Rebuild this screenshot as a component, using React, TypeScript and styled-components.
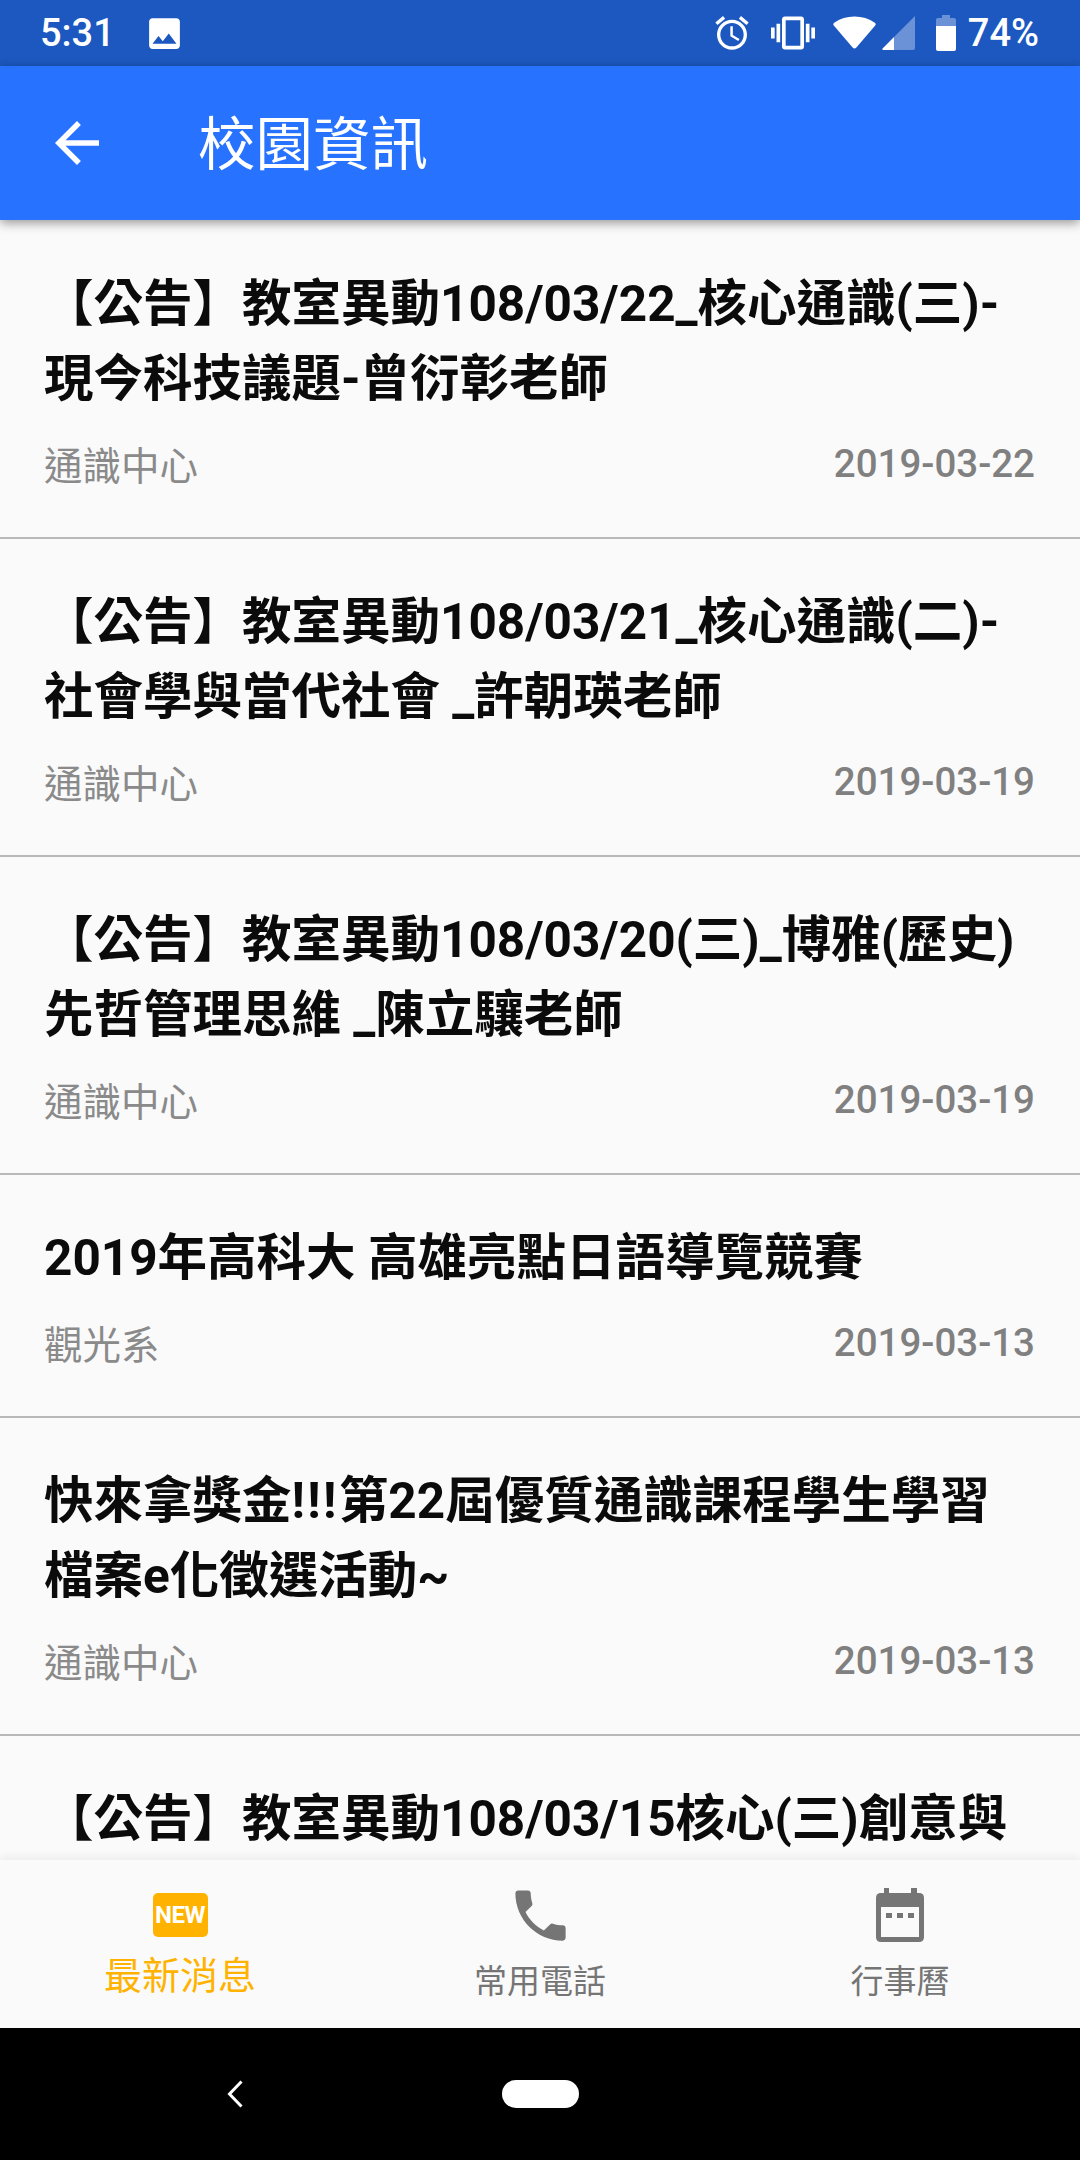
import React from "react";
import styled, { createGlobalStyle } from "styled-components";

const FONT = `Roboto, "Noto Sans CJK TC", sans-serif`;

const Global = createGlobalStyle`
  html, body { margin: 0; padding: 0; background: #000; }
  * { box-sizing: border-box; }
`;

const Screen = styled.div`
  width: 1080px;
  height: 2160px;
  display: flex;
  flex-direction: column;
  overflow: hidden;
  background: #fafafa;
  font-family: ${FONT};
`;

const StatusBar = styled.div`
  height: 66px;
  flex: none;
  display: flex;
  align-items: center;
  padding: 0 41px 0 40px;
  background: #1c58c0;
  color: #fff;
`;
const Time = styled.span`
  font-size: 38px;
  font-weight: 500;
  width: 104px;
`;
const StatusSpacer = styled.div`
  flex: 1;
`;
const StatusIcons = styled.div`
  display: flex;
  align-items: center;
`;
const Glyph = styled.svg<{ $gap?: number }>`
  display: block;
  flex: none;
  fill: currentColor;
  margin-left: ${(p) => p.$gap ?? 0}px;
`;
const Percent = styled.span`
  font-size: 38px;
  font-weight: 500;
  margin-left: 12px;
`;

const AppBar = styled.header`
  position: relative;
  z-index: 2;
  height: 154px;
  flex: none;
  display: flex;
  align-items: center;
  padding-left: 44px;
  background: #2773ff;
  color: #fff;
  box-shadow: 0 3px 10px rgba(0, 0, 0, 0.4);
`;
const BackIcon = styled.svg`
  width: 66px;
  height: 66px;
  fill: #fff;
`;
const Title = styled.h1`
  margin: 6px 0 0 88px;
  font-size: 57.5px;
  font-weight: 400;
  line-height: 1;
`;

const List = styled.main`
  flex: 1;
  min-height: 0;
  overflow: hidden;
  padding-top: 1px;
`;
const Row = styled.article`
  padding: 46px 44px 46px 44px;
  border-bottom: 2px solid #b8b8b8;
`;
const RowTitle = styled.div`
  font-size: 49.5px;
  font-weight: 700;
  line-height: 75px;
  color: #0b0b0b;
  white-space: nowrap;
`;
const Bangs = styled.span`
  letter-spacing: 2.4px;
`;
const Meta = styled.div`
  display: flex;
  justify-content: space-between;
  align-items: center;
  margin-top: 18px;
  height: 56px;
  padding-right: 1px;
  color: #8a8a8a;
`;
const Source = styled.span`
  font-size: 38.5px;
`;
const DateText = styled.span`
  font-size: 38.5px;
  font-weight: 500;
  color: #808080;
`;

const BottomNav = styled.nav`
  position: relative;
  z-index: 2;
  height: 168px;
  flex: none;
  display: grid;
  grid-template-columns: repeat(3, 1fr);
  background: #fafafa;
  box-shadow: 0 -3px 8px rgba(0, 0, 0, 0.06);
`;
const Tab = styled.div<{ $active?: boolean }>`
  display: flex;
  flex-direction: column;
  align-items: center;
  color: ${(p) => (p.$active ? "#ffb300" : "#757575")};
`;
const TabIconBox = styled.div`
  height: 54px;
  margin-top: 28px;
  display: flex;
  align-items: center;
  justify-content: center;
`;
const TabLabel = styled.span<{ $active?: boolean }>`
  font-size: ${(p) => (p.$active ? 38 : 33)}px;
  line-height: 44px;
  margin-top: ${(p) => (p.$active ? 12 : 18)}px;
`;
const NewBadge = styled.div`
  width: 55px;
  height: 44px;
  border-radius: 5px;
  background: #ffb300;
  color: #fff;
  display: flex;
  align-items: center;
  justify-content: center;
  font-size: 24px;
  font-weight: 700;
  letter-spacing: -0.5px;
  line-height: 1;
`;

const NavBar = styled.div`
  height: 132px;
  flex: none;
  background: #000;
  display: flex;
  align-items: center;
  padding-left: 227px;
  gap: 259px;
`;
const Pill = styled.div`
  width: 77px;
  height: 28px;
  border-radius: 14px;
  background: #fff;
`;

const items: { lines: React.ReactNode[]; src: string; date: string }[] = [
  { lines: ["【公告】教室異動108/03/22_核心通識(三)-", "現今科技議題-曾衍彰老師"], src: "通識中心", date: "2019-03-22" },
  { lines: ["【公告】教室異動108/03/21_核心通識(二)-", "社會學與當代社會 _許朝瑛老師"], src: "通識中心", date: "2019-03-19" },
  { lines: ["【公告】教室異動108/03/20(三)_博雅(歷史)", "先哲管理思維 _陳立驤老師"], src: "通識中心", date: "2019-03-19" },
  { lines: ["2019年高科大 高雄亮點日語導覽競賽"], src: "觀光系", date: "2019-03-13" },
  {
    lines: [
      <>
        快來拿獎金<Bangs>!!!</Bangs>第22屆優質通識課程學生學習
      </>,
      "檔案e化徵選活動~",
    ],
    src: "通識中心",
    date: "2019-03-13",
  },
  { lines: ["【公告】教室異動108/03/15核心(三)創意與", "問題解決"], src: "通識中心", date: "2019-03-13" },
];

export default function App() {
  return (
    <Screen>
      <Global />
      <StatusBar>
        <Time>5:31</Time>
        <Glyph width="41" height="41" viewBox="0 0 24 24">
          <path d="M21 19V5c0-1.1-.9-2-2-2H5c-1.1 0-2 .9-2 2v14c0 1.1.9 2 2 2h14c1.1 0 2-.9 2-2zM8.5 13.5l2.5 3.01L14.5 12l4.5 6H5l3.5-4.5z" />
        </Glyph>
        <StatusSpacer />
        <StatusIcons>
          <Glyph width="40" height="40" viewBox="0 0 24 24">
            <path d="M22 5.72l-4.6-3.86-1.29 1.53 4.6 3.86L22 5.72zM7.88 3.39L6.6 1.86 2 5.71l1.29 1.53 4.59-3.85zM12.5 8H11v6l4.75 2.85.75-1.23-4-2.37V8zM12 4c-4.97 0-9 4.03-9 9s4.02 9 9 9c4.97 0 9-4.03 9-9s-4.03-9-9-9zm0 16c-3.87 0-7-3.13-7-7s3.13-7 7-7 7 3.13 7 7-3.13 7-7 7z" />
          </Glyph>
          <Glyph $gap={19} width="44" height="44" viewBox="0 0 24 24">
            <path d="M0 15h2V9H0v6zm3 2h2V7H3v10zm19-8v6h2V9h-2zm-3 8h2V7h-2v10zM16.5 3h-9C6.67 3 6 3.67 6 4.5v15c0 .83.67 1.5 1.5 1.5h9c.83 0 1.5-.67 1.5-1.5v-15c0-.83-.67-1.5-1.5-1.5zM16 19H8V5h8v14z" />
          </Glyph>
          <Glyph $gap={18} width="43" height="34" viewBox="0 0 43 34">
            <path d="M19.6 31.6 L0.8 9.6 Q-0.4 8 1.2 6.8 Q10 0.5 21.5 0.5 Q33 0.5 41.8 6.8 Q43.4 8 42.2 9.6 L23.4 31.6 Q21.5 33.6 19.6 31.6 Z" />
          </Glyph>
          <Glyph $gap={6} width="34" height="36" viewBox="0 0 34 36">
            <path opacity="0.35" d="M33 1 V33 Q33 35 31 35 H12 V22 Z" />
            <path d="M12 22 V35 H1 Q0 35 0.6 33.5 Z" />
          </Glyph>
          <Glyph $gap={20} width="20" height="36" viewBox="0 0 20 36">
            <path opacity="0.35" d="M6 0 H14 V3 H18 Q20 3 20 5 V11 H0 V5 Q0 3 2 3 H6 Z" />
            <path d="M0 11 H20 V34 Q20 36 18 36 H2 Q0 36 0 34 Z" />
          </Glyph>
          <Percent>74%</Percent>
        </StatusIcons>
      </StatusBar>

      <AppBar>
        <BackIcon viewBox="0 0 24 24">
          <path d="M20 11H7.83l5.59-5.59L12 4l-8 8 8 8 1.41-1.41L7.83 13H20v-2z" />
        </BackIcon>
        <Title>校園資訊</Title>
      </AppBar>

      <List>
        {items.map((it, i) => (
          <Row key={i}>
            <RowTitle>
              {it.lines.map((l, j) => (
                <div key={j}>{l}</div>
              ))}
            </RowTitle>
            <Meta>
              <Source>{it.src}</Source>
              <DateText>{it.date}</DateText>
            </Meta>
          </Row>
        ))}
      </List>

      <BottomNav>
        <Tab $active>
          <TabIconBox>
            <NewBadge>NEW</NewBadge>
          </TabIconBox>
          <TabLabel $active>最新消息</TabLabel>
        </Tab>
        <Tab>
          <TabIconBox>
            <Glyph width="67" height="67" viewBox="0 0 24 24">
              <path d="M6.62 10.79c1.44 2.83 3.76 5.14 6.59 6.59l2.2-2.2c.27-.27.67-.36 1.02-.24 1.12.37 2.33.57 3.57.57.55 0 1 .45 1 1V20c0 .55-.45 1-1 1-9.39 0-17-7.61-17-17 0-.55.45-1 1-1h3.5c.55 0 1 .45 1 1 0 1.25.2 2.45.57 3.57.11.35.03.74-.25 1.02l-2.2 2.2z" />
            </Glyph>
          </TabIconBox>
          <TabLabel>常用電話</TabLabel>
        </Tab>
        <Tab>
          <TabIconBox>
            <Glyph width="48" height="54" viewBox="0 0 48 54">
              <path
                fillRule="evenodd"
                d="M8 0 H13 V5 H35 V0 H41 V5 H43 Q48 5 48 10 V49 Q48 54 43 54 H5 Q0 54 0 49 V10 Q0 5 5 5 H8 Z M5 19 V49 H43 V19 Z M10 25 H16 V30 H10 Z M21 25 H27 V30 H21 Z M32 25 H38 V30 H32 Z"
              />
            </Glyph>
          </TabIconBox>
          <TabLabel>行事曆</TabLabel>
        </Tab>
      </BottomNav>

      <NavBar>
        <Glyph width="16" height="28" viewBox="0 0 16 28">
          <path d="M14.5 1.5 L2.5 14 L14.5 26.5" fill="none" stroke="#fff" strokeWidth="3" />
        </Glyph>
        <Pill />
      </NavBar>
    </Screen>
  );
}
